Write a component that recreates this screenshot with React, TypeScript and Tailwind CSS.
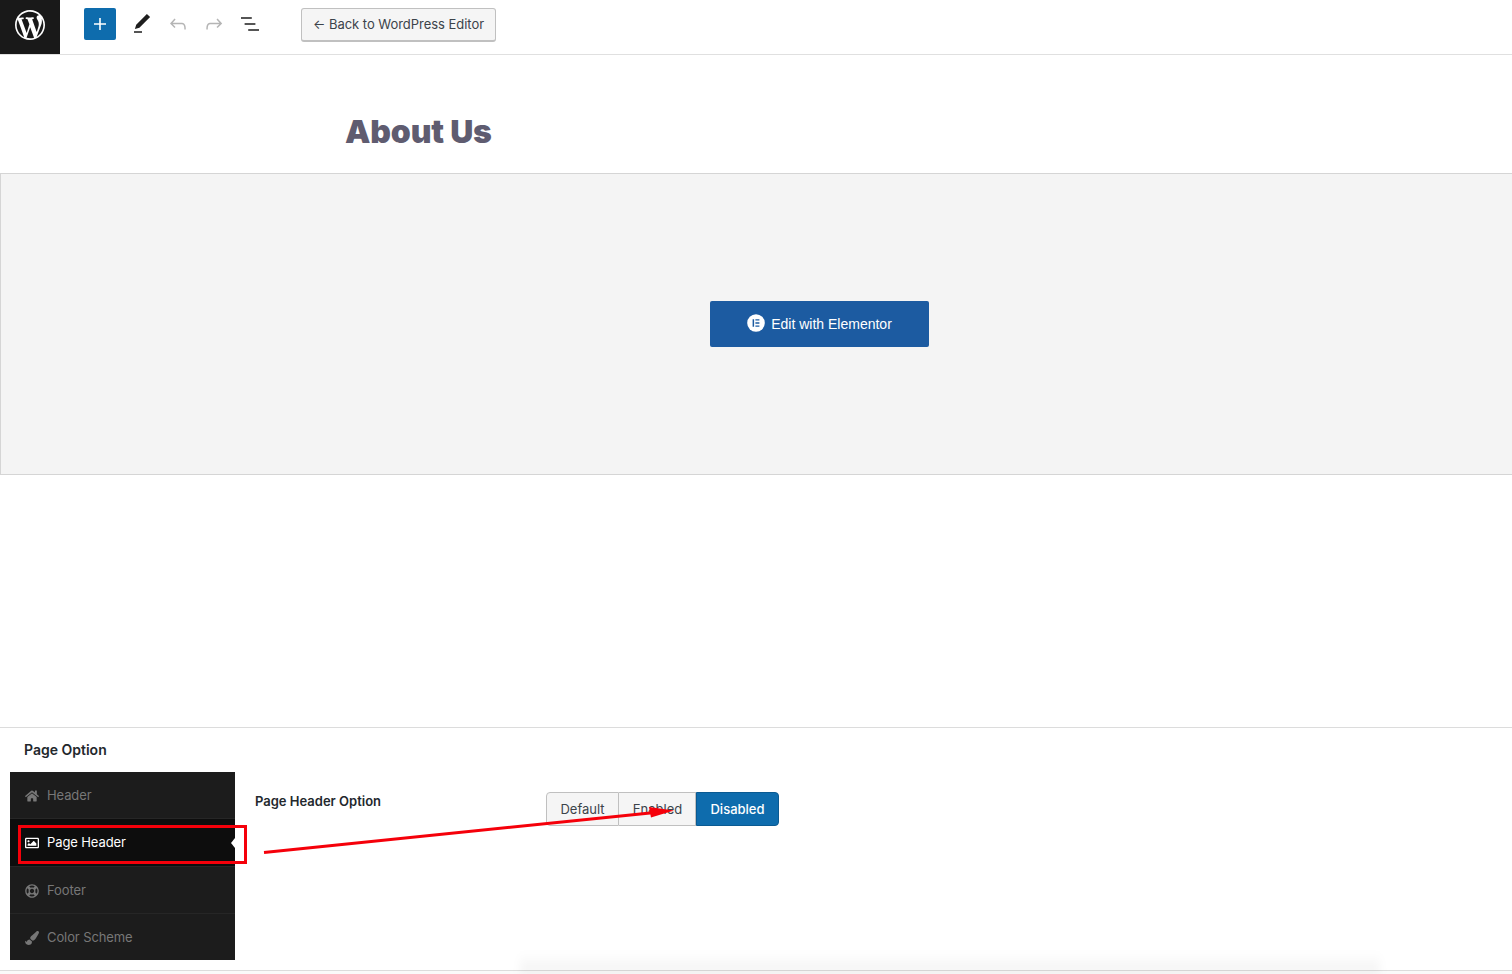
import { FaHome, FaRegImage, FaRegLifeRing, FaPaintBrush } from "react-icons/fa";

const sans = "font-['Inter','Liberation_Sans',sans-serif]";

function Gb({ d, className }: { d: string; className: string }) {
  return (
    <svg viewBox="0 0 24 24" width="24" height="24" fill="currentColor" className={className}>
      <path d={d} />
    </svg>
  );
}

const rows = [
  { label: "Header", Icon: FaHome, active: false, box: "h-[47px] pt-[2px] border-b border-[#262626]" },
  { label: "Page Header", Icon: FaRegImage, active: true, box: "h-[48px] pt-[1px] border-b border-[#262626]" },
  { label: "Footer", Icon: FaRegLifeRing, active: false, box: "h-[47px] pt-[2px] border-b border-[#262626]" },
  { label: "Color Scheme", Icon: FaPaintBrush, active: false, box: "h-[46px] pt-[1px]" },
];

export default function App() {
  return (
    <div className={`relative flex h-[974px] w-full flex-col overflow-hidden bg-white ${sans}`}>
      <header className="flex h-[55px] shrink-0 items-start border-b border-[#e0e0e0]">
        <div className="flex h-[54px] w-[60px] items-center justify-center bg-[#191919] pb-1 pr-[1px] text-white">
          <svg viewBox="0 0 20 20" width="30" height="30" fill="currentColor">
            <path d="M20 10c0-5.51-4.49-10-10-10C4.48 0 0 4.49 0 10c0 5.52 4.48 10 10 10 5.51 0 10-4.48 10-10zM7.78 15.37L4.37 6.22c.55-.02 1.17-.08 1.17-.08.5-.06.44-1.13-.06-1.11 0 0-1.45.11-2.37.11-.18 0-.37 0-.58-.01C4.12 2.69 6.87 1.11 10 1.11c2.33 0 4.45.87 6.05 2.34-.68-.11-1.65.39-1.65 1.58 0 .74.45 1.36.9 2.1.35.61.55 1.36.55 2.46 0 1.49-1.4 5-1.4 5l-3.03-8.37c.54-.02.82-.17.82-.17.5-.05.44-1.25-.06-1.22 0 0-1.44.12-2.38.12-.87 0-2.33-.12-2.33-.12-.5-.03-.56 1.2-.06 1.22l.92.08 1.26 3.41zM17.41 10c.24-.64.74-1.87.43-4.25.7 1.29 1.05 2.71 1.05 4.25 0 3.29-1.73 6.24-4.4 7.78.97-2.59 1.94-5.2 2.92-7.78zM6.1 18.09C3.12 16.65 1.11 13.53 1.11 10c0-1.3.23-2.48.72-3.59C3.25 10.3 4.67 14.2 6.1 18.09zm4.03-6.63l2.58 6.98c-.86.29-1.76.45-2.71.45-.79 0-1.57-.11-2.29-.33.81-2.38 1.62-4.74 2.42-7.1z" />
          </svg>
        </div>
        <div className="mt-2 ml-6 flex h-8 items-center">
          <div className="flex h-8 w-8 items-center justify-center rounded-[2px] bg-[#0e6cad] text-white">
            <Gb d="M18 11.2h-5.2V6h-1.6v5.2H6v1.6h5.2V18h1.6v-5.2H18z" className="" />
          </div>
          <Gb d="M20.1 5.1L16.9 2 6.2 12.7l-1.3 4.4 4.5-1.3L20.1 5.1zM4 20.8h8v-1.5H4v1.5z" className="ml-[14px] text-[#1e1e1e]" />
          <Gb d="M18.3 11.7c-.6-.6-1.4-.9-2.3-.9H6.7l2.9-3.3-1.1-1-4.5 5L8.5 16l1-1-2.7-2.7H16c.5 0 .9.2 1.3.5 1 1 1 3.4 1 4.5v.3h1.5v-.2c0-1.5 0-4.3-1.5-5.7z" className="ml-3 text-[#b5b5b5]" />
          <Gb d="M15.6 6.5l-1.1 1 2.9 3.3H8c-.9 0-1.7.3-2.3.9-1.4 1.5-1.4 4.2-1.4 5.6v.2h1.5v-.3c0-1.1 0-3.5 1-4.5.3-.3.7-.5 1.3-.5h9.2L14.5 15l1.1 1.1 4.6-4.6-4.6-5z" className="ml-3 text-[#b5b5b5]" />
          <Gb d="M13.8 5.2H3v1.5h10.8V5.2zm-3.6 12v1.5H21v-1.5H10.2zm7.2-6H6.6v1.5h10.8v-1.5z" className="ml-3 text-[#1e1e1e]" />
          <button className="ml-[39px] flex h-[34px] w-[195px] shrink-0 items-center justify-center self-start rounded-[3px] border border-b-2 border-[#c0c0c0] bg-[#f5f5f5] text-[13px] tracking-[-0.03px] text-[#3c434a]">
            ← Back to WordPress Editor
          </button>
        </div>
      </header>

      <div className="flex h-[118px] shrink-0 items-end pb-[25px] pl-[345px]">
        <h1 className="text-[32px] leading-none font-black tracking-[-0.15px] text-[#5f5c70]">About Us</h1>
      </div>

      <div className="flex h-[302px] shrink-0 items-center border-y border-l border-[#d5d5d5] bg-[#f4f4f4] pl-[709px]">
        <button className="flex h-[46px] w-[219px] items-center justify-center gap-[6px] rounded-[2px] bg-[#1c5ba1] font-['Liberation_Sans',sans-serif] text-[14px] text-white">
          <svg viewBox="0 0 18 18" width="18" height="18" className="-translate-y-[1px]">
            <circle cx="9" cy="9" r="8.8" fill="#fff" />
            <path d="M5.6 5.2h1.5v7.6H5.6zM8.4 5.2h4v1.4h-4zM8.4 8.3h4v1.4h-4zM8.4 11.4h4v1.4h-4z" fill="#1c5ba1" />
          </svg>
          Edit with Elementor
        </button>
      </div>

      <div className="h-[252px] shrink-0" />

      <section className="flex h-[243px] shrink-0 flex-col border-t border-[#dcdcdc]">
        <h2 className="mt-[13px] ml-6 text-[14px] leading-[17px] font-semibold text-[#23282d]">Page Option</h2>
        <div className="mt-[14px] ml-[10px] flex">
          <nav className="flex h-[188px] w-[225px] flex-col bg-[#1c1c1c] text-[13px] tracking-[-0.1px]">
            {rows.map(({ label, Icon, active, box }) => (
              <div
                key={label}
                className={`relative flex items-center gap-[8px] pl-[15px] ${box} ${
                  active ? "bg-[#0d0d0d] text-white" : "text-[#777777]"
                }`}
              >
                <Icon className="h-[14px] w-[14px]" />
                <span>{label}</span>
                {active && (
                  <span className="absolute top-[19px] right-0 h-0 w-0 border-y-[5px] border-r-[4px] border-y-transparent border-r-white" />
                )}
              </div>
            ))}
          </nav>
          <div className="flex flex-1 items-start">
            <div className="mt-[21px] ml-5 w-[291px] text-[13px] leading-4 font-semibold text-[#23282d]">Page Header Option</div>
            <div className="mt-5 flex h-[34px] pt-0 text-[13px] text-[#3c434a]">
              <span className="flex w-[73px] items-center justify-center rounded-l-[4px] border border-[#c0c0c0] bg-[#f5f5f5] pt-[2px]">Default</span>
              <span className="flex w-[77px] items-center justify-center border-y border-r border-[#c0c0c0] bg-[#f5f5f5] pt-[2px] pl-[1px]">Enabled</span>
              <span className="flex w-[83px] items-center justify-center rounded-r-[4px] border border-[#0a5a92] bg-[#0e6cad] pt-[2px] font-medium text-white">Disabled</span>
            </div>
          </div>
        </div>
      </section>

      <div className="h-[1px] shrink-0 bg-[#dcdcdc]" />
      <div className="flex-1 bg-[#fafafa]" />

      {/* soft shadow rising from the bottom edge */}
      <div className="pointer-events-none absolute top-[952px] left-[520px] h-[22px] w-[860px] bg-gradient-to-b from-transparent to-black/5 blur-[4px]" />

      {/* red annotation drawn over the page */}
      <div className="pointer-events-none absolute top-[825px] left-[18px] h-[39px] w-[229px] border-[3px] border-[#f5000a]" />
      <svg className="pointer-events-none absolute top-0 left-0" width="1512" height="974" fill="none">
        <line x1="264" y1="852.5" x2="655" y2="812.5" stroke="#f5000a" strokeWidth="3" />
        <polygon points="674,810.5 649,807 651,817.5" fill="#f5000a" />
      </svg>
    </div>
  );
}
